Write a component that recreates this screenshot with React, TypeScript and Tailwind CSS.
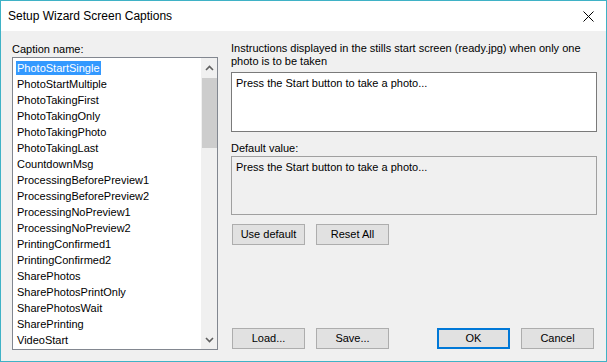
const items = [
  'PhotoStartSingle',
  'PhotoStartMultiple',
  'PhotoTakingFirst',
  'PhotoTakingOnly',
  'PhotoTakingPhoto',
  'PhotoTakingLast',
  'CountdownMsg',
  'ProcessingBeforePreview1',
  'ProcessingBeforePreview2',
  'ProcessingNoPreview1',
  'ProcessingNoPreview2',
  'PrintingConfirmed1',
  'PrintingConfirmed2',
  'SharePhotos',
  'SharePhotosPrintOnly',
  'SharePhotosWait',
  'SharePrinting',
  'VideoStart',
]

function Btn({ label, primary }: { label: string; primary?: boolean }) {
  return (
    <button
      className={`flex h-[21px] w-[73px] items-center justify-center bg-[#e1e1e1] text-black ${primary ? 'border-2 border-[#0078d7]' : 'border border-[#adadad]'}`}
    >
      {label}
    </button>
  )
}

function Chevron({ up }: { up?: boolean }) {
  return (
    <svg width="9" height="6" viewBox="0 0 9 6" className="text-[#606060]">
      <path d={up ? 'M1 5 L4.5 1.5 L8 5' : 'M1 1 L4.5 4.5 L8 1'} fill="none" stroke="currentColor" strokeWidth="1.6" />
    </svg>
  )
}

export default function App() {
  return (
    <div
      className="flex h-[362px] w-[607px] flex-col border border-[#3fb2c6] text-[11px] text-black"
      style={{ fontFamily: '"Liberation Sans", Arial, sans-serif' }}
    >
      <div className="flex h-[30px] shrink-0 items-center justify-between bg-white pl-[7px] pr-[12px]">
        <span className="text-[12px]">Setup Wizard Screen Captions</span>
        <svg width="11" height="11" viewBox="0 0 11 11">
          <path d="M0.5 0.5 L10.5 10.5 M10.5 0.5 L0.5 10.5" stroke="#000" strokeWidth="1" />
        </svg>
      </div>

      <div className="flex min-h-0 flex-1 gap-[13px] bg-[#f0f0f0] pb-[11px] pl-[11px] pr-[9px] pt-[11px]">
        {/* left: caption list */}
        <div className="flex w-[206px] flex-col">
          <div className="h-[15px] leading-[15px]">Caption name:</div>
          <div className="flex min-h-0 flex-1 border border-[#828790] bg-white">
            <div className="flex-1 pl-[3px] pt-[2px]">
              {items.map((item, i) => (
                <div key={item} className="flex h-[16px] items-center">
                  <span className={`px-[1px] leading-[14px] ${i === 0 ? 'bg-[#3399ff] text-white' : ''}`}>{item}</span>
                </div>
              ))}
            </div>
            <div className="flex w-[16px] flex-col items-center bg-[#f0f0f0]">
              <div className="flex h-[20px] items-center justify-center">
                <Chevron up />
              </div>
              <div className="h-[70px] w-[15px] bg-[#cdcdcd]" />
              <div className="flex-1" />
              <div className="flex h-[18px] items-center justify-center">
                <Chevron />
              </div>
            </div>
          </div>
        </div>

        {/* right: caption text */}
        <div className="flex w-[366px] flex-col">
          <div className="mb-[4px] leading-[13px]">
            Instructions displayed in the stills start screen (ready.jpg) when only one
            <br />
            photo is to be taken
          </div>
          <div className="h-[60px] border border-[#7a7a7a] bg-white px-[4px] pt-[3px] leading-[14px]">
            Press the Start button to take a photo...
          </div>
          <div className="mt-[9px] h-[15px] leading-[15px]">Default value:</div>
          <div className="h-[59px] border border-[#a0a0a0] px-[4px] pt-[3px] leading-[14px]">
            Press the Start button to take a photo...
          </div>
          <div className="ml-[1px] mt-[9px] flex gap-[11px]">
            <Btn label="Use default" />
            <Btn label="Reset All" />
          </div>
          <div className="mb-[1px] ml-[1px] mr-[3px] mt-auto flex justify-between">
            <div className="flex gap-[11px]">
              <Btn label="Load..." />
              <Btn label="Save..." />
            </div>
            <div className="flex gap-[11px]">
              <Btn label="OK" primary />
              <Btn label="Cancel" />
            </div>
          </div>
        </div>
      </div>
    </div>
  )
}
